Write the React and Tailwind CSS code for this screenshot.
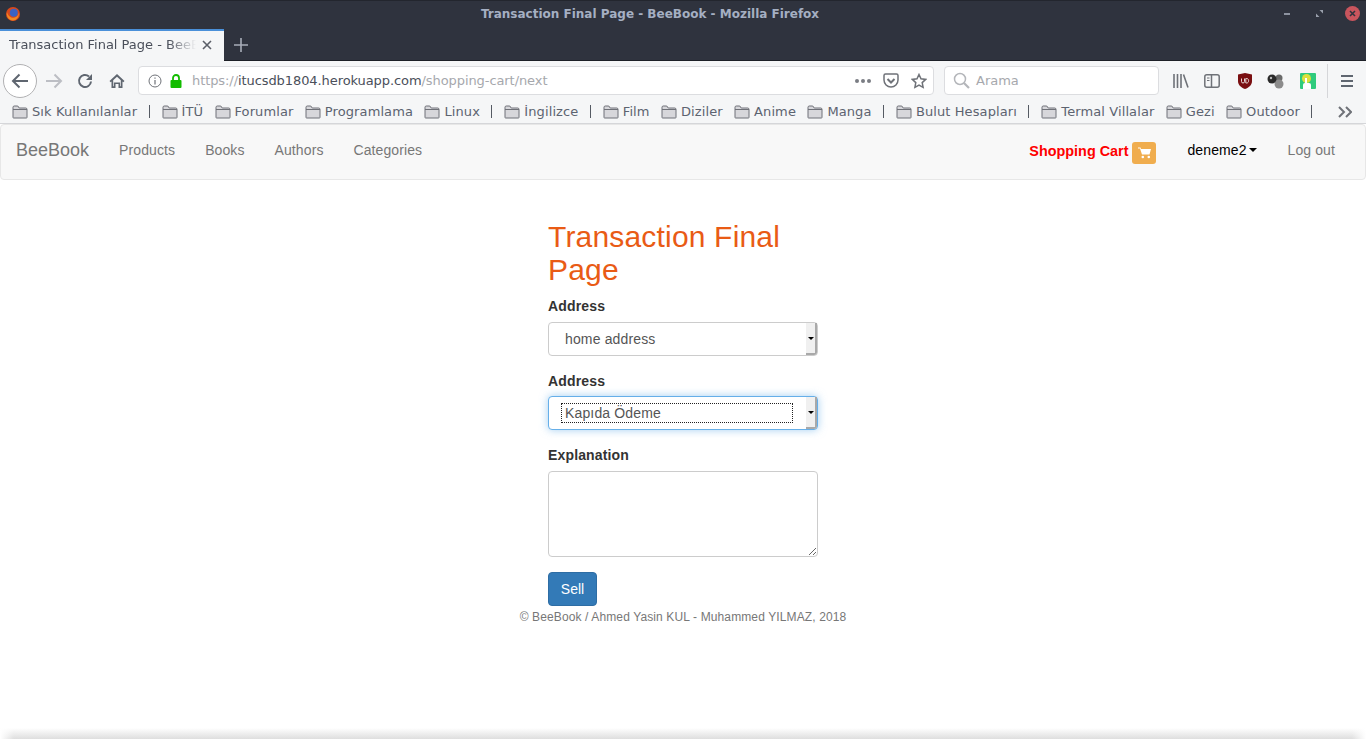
import React from 'react';

const bookmarks = [
  { name: 'Sık Kullanılanlar', sep: true },
  { name: 'İTÜ' },
  { name: 'Forumlar' },
  { name: 'Programlama' },
  { name: 'Linux', sep: true },
  { name: 'İngilizce', sep: true },
  { name: 'Film' },
  { name: 'Diziler' },
  { name: 'Anime' },
  { name: 'Manga', sep: true },
  { name: 'Bulut Hesapları', sep: true },
  { name: 'Termal Villalar' },
  { name: 'Gezi' },
  { name: 'Outdoor', sep: true },
];

const Folder = () => (
  <svg width="16" height="14" viewBox="0 0 16 14" className="shrink-0">
    <path d="M1 12.5V2.2C1 1.5 1.5 1 2.2 1h3.6l1.4 2h6.6c.7 0 1.2.5 1.2 1.2v8.3c0 .3-.2.5-.5.5h-13c-.3 0-.5-.2-.5-.5z" fill="#d7d7db" stroke="#6f7178" strokeWidth="1" />
    <path d="M1 4.5h14" stroke="#6f7178" strokeWidth="1" />
  </svg>
);

const TitleBar = () => (
  <div className="h-[29px] bg-[#2f333e] border-t border-[#23262e] relative flex items-center justify-center pr-[66px] shrink-0">
    <svg width="16" height="16" viewBox="0 0 16 16" className="absolute left-[5px] top-[5px]">
      <circle cx="8" cy="8" r="7" fill="#d9481c" />
      <circle cx="8.8" cy="6.8" r="4" fill="#3a62c4" />
      <path d="M2 6c1 5 6 7 9 5 1.5-1 2.5-2.500 2.700-4.500C14.500 11 11 15 7.500 14.500 3.500 14 1 10 2 6z" fill="#f08a24" />
    </svg>
    <span className="font-['DejaVu_Sans'] font-bold text-[12px] text-[#a5afc2] -mt-[2px]">Transaction Final Page - BeeBook - Mozilla Firefox</span>
    <div className="absolute right-[6px] top-[5px] flex items-center">
      <div className="w-[6px] h-[2px] bg-[#8d93a0] mr-[26px]" />
      <svg width="7" height="7" viewBox="0 0 7 7" className="mr-[22px]">
        <path d="M0 7V3.500L3.500 7zM7 0v3.500L3.500 0z" fill="#9aa0ac" />
      </svg>
      <div className="w-[15px] h-[15px] rounded-full bg-[#c9555d] flex items-center justify-center">
        <svg width="7" height="7" viewBox="0 0 7 7">
          <path d="M1 1l5 5M6 1L1 6" stroke="#2f333e" strokeWidth="1.600" />
        </svg>
      </div>
    </div>
  </div>
);

const TabStrip = () => (
  <div className="h-[32px] bg-[#2f333e] flex shrink-0 border-b border-[#1d2027]">
    <div className="w-[224px] h-[32px] bg-[#f5f6f7] border-t-2 border-[#4a90d9] flex items-center pl-[9px] relative">
      <span className="font-['DejaVu_Sans'] text-[13px] text-[#4a4f5a] w-[187px] -mt-[3px] overflow-hidden whitespace-nowrap mask-r-from-85%">Transaction Final Page - BeeBook</span>
      <svg width="10" height="10" viewBox="0 0 10 10" className="ml-[6px] -mt-[2px]">
        <path d="M1 1l8 8M9 1l-8 8" stroke="#5b5f68" strokeWidth="1.600" />
      </svg>
    </div>
    <div className="w-[34px] flex items-center justify-center">
      <svg width="14" height="14" viewBox="0 0 14 14">
        <path d="M7 0v14M0 7h14" stroke="#a8adb8" strokeWidth="1.600" />
      </svg>
    </div>
  </div>
);

const NavToolbar = () => (
  <div className="h-[38px] pt-[1px] bg-[#f5f6f7] flex items-center shrink-0 relative">
    <div className="w-[34px] h-[34px] ml-[3px] rounded-full border border-[#b1b1b3] bg-white flex items-center justify-center shrink-0">
      <svg width="18" height="16" viewBox="0 0 18 16" fill="none" stroke="#5f6670" strokeWidth="2">
        <path d="M17 8H2M8.500 1.500L2 8l6.500 6.500" />
      </svg>
    </div>
    <svg width="18" height="16" viewBox="0 0 18 16" fill="none" stroke="#bcbec4" strokeWidth="2" className="ml-[8px] shrink-0">
      <path d="M1 8h15M9.500 1.500L16 8l-6.500 6.500" />
    </svg>
    <svg width="16" height="16" viewBox="0 0 16 16" fill="none" className="ml-[14px] shrink-0">
      <path d="M14 8.500A6 6 0 1 1 12 3.500" stroke="#5f6670" strokeWidth="2" />
      <path d="M15 1v6H9z" fill="#5f6670" />
    </svg>
    <svg width="16" height="16" viewBox="0 0 16 16" className="ml-[16px] shrink-0">
      <path fillRule="evenodd" d="M8 1L0.500 8l1.200 1.200L2.500 8.500V15h4v-4h3v4h4V8.500l.8.7L15.500 8zM8 3.700l3.800 3.500V13.300h-.7V9.500H4.900v3.800h-.7V7.200z" fill="#5f6670" />
    </svg>
    <div className="ml-[13px] w-[796px] h-[29px] bg-white border border-[#dcdde0] rounded-[4px] flex items-center shrink-0">
      <svg width="14" height="14" viewBox="0 0 14 14" fill="none" className="ml-[9px] shrink-0">
        <circle cx="7" cy="7" r="6" stroke="#6f7278" strokeWidth="1" />
        <path d="M7 6v4.500M7 3.500v1.200" stroke="#6f7278" strokeWidth="1.200" />
      </svg>
      <svg width="14" height="14" viewBox="0 0 14 14" className="ml-[7px] shrink-0">
        <path d="M4 6V4a3 3 0 0 1 6 0v2" fill="none" stroke="#12bc00" strokeWidth="1.800" />
        <rect x="1.500" y="6" width="11" height="8" rx="1" fill="#12bc00" />
      </svg>
      <span className="ml-[9px] font-['DejaVu_Sans'] text-[13px] tracking-[-0.08px] text-[#a6a8ad] whitespace-nowrap">
        https://<span className="text-[#4a4f5a]">itucsdb1804.herokuapp.com</span>/shopping-cart/next
      </span>
      <div className="ml-auto flex items-center shrink-0">
        <div className="flex gap-[2px] mr-[12px]">
          <div className="w-[4px] h-[4px] rounded-full bg-[#7a7d83]" />
          <div className="w-[4px] h-[4px] rounded-full bg-[#7a7d83]" />
          <div className="w-[4px] h-[4px] rounded-full bg-[#7a7d83]" />
        </div>
        <svg width="16" height="15" viewBox="0 0 16 15" fill="none" stroke="#6f7278" strokeWidth="1.500" className="mr-[12px]">
          <path d="M2.500 1h11c.8 0 1.500.7 1.500 1.500V7a7 7 0 0 1-14 0V2.500C1 1.700 1.700 1 2.500 1z" />
          <path d="M4.500 6L8 9.500 11.500 6" strokeWidth="2" />
        </svg>
        <svg width="16" height="16" viewBox="0 0 16 16" fill="none" stroke="#6f7278" strokeWidth="1.500" className="mr-[6px]">
          <path d="M8 1.500l2 4.300 4.700.6-3.500 3.200.9 4.700L8 12l-4.100 2.300.9-4.700L1.300 6.400 6 5.800z" />
        </svg>
      </div>
    </div>
    <div className="ml-[10px] w-[215px] h-[29px] bg-white border border-[#dcdde0] rounded-[4px] flex items-center shrink-0">
      <svg width="17" height="17" viewBox="0 0 17 17" fill="none" stroke="#b4b6ba" className="ml-[8px] shrink-0">
        <circle cx="7" cy="7" r="5.500" strokeWidth="1.500" />
        <path d="M11 11l5 5" strokeWidth="2.200" />
      </svg>
      <span className="ml-[6px] font-['DejaVu_Sans'] text-[13px] text-[#a6a8ad]">Arama</span>
    </div>
    <svg width="16" height="14" viewBox="0 0 16 14" fill="none" stroke="#6f7278" strokeWidth="1.600" className="ml-[14px] shrink-0">
      <path d="M1 0v14M4.500 0v14M8 0v14M10.500 0.500L15 13.500" />
    </svg>
    <svg width="16" height="14" viewBox="0 0 16 14" fill="none" stroke="#6f7278" className="ml-[15px] shrink-0">
      <rect x="0.800" y="0.800" width="14.400" height="12.400" rx="2" strokeWidth="1.500" />
      <path d="M7.500 1v12" strokeWidth="1.500" />
      <path d="M3 4h2.500M3 6.500h2.500" strokeWidth="1" />
    </svg>
    <svg width="16" height="16" viewBox="0 0 16 16" className="ml-[17px] shrink-0">
      <path d="M1 1.500L8 0l7 1.500V8c0 4-3 6.500-7 8-4-1.500-7-4-7-8z" fill="#7a0f11" />
      <path d="M4.500 5.500v3a1.500 1.500 0 0 0 3 0v-3M8.800 5.500v4.500h1c2.400 0 2.400-4.500 0-4.500z" fill="none" stroke="#e8d8d8" strokeWidth="1" />
    </svg>
    <svg width="18" height="16" viewBox="0 0 18 16" className="ml-[14px] shrink-0">
      <circle cx="12" cy="5" r="3.500" fill="#6a6a6a" />
      <circle cx="12" cy="11" r="4.500" fill="#8c8c8c" />
      <circle cx="5" cy="6" r="4.500" fill="#2a2a2a" />
      <circle cx="4" cy="5" r="1.200" fill="#bbbbbb" />
    </svg>
    <div className="ml-[15px] w-[16px] h-[16px] rounded-[1px] bg-[#2fcb7d] relative overflow-hidden shrink-0">
      <div className="absolute left-[2px] top-[1px] w-[9px] h-[9px] rounded-full bg-[#dbe03c]" />
      <div className="absolute left-[5px] top-[5px] w-[2px] h-[8px] bg-white" />
      <div className="absolute left-[3px] top-[10px] w-[8px] h-[6px] bg-white rounded-t-[2px]" />
    </div>
    <div className="ml-[11px] w-px h-[34px] bg-[#d5d6d9] shrink-0" />
    <div className="ml-[13px] w-[12px] shrink-0 flex flex-col gap-[3px]">
      <div className="h-[2px] bg-[#5f6670]" />
      <div className="h-[2px] bg-[#5f6670]" />
      <div className="h-[2px] bg-[#5f6670]" />
    </div>
  </div>
);

const BookmarksBar = () => (
  <div className="h-[25px] pt-[1px] bg-[#f5f6f7] border-b border-[#d5d6d9] flex items-center pl-[12px] shrink-0 font-['DejaVu_Sans'] text-[13px] tracking-[0.1px] text-[#5c6370] whitespace-nowrap">
    {bookmarks.map((b) => (
      <React.Fragment key={b.name}>
        <div className="flex items-center gap-[4px] mr-[11.4px]">
          <Folder />
          <span>{b.name}</span>
        </div>
        {b.sep && <div className="w-px h-[13px] bg-[#555a63] mr-[12px]" />}
      </React.Fragment>
    ))}
    <svg width="14" height="12" viewBox="0 0 14 12" fill="none" stroke="#6f7278" strokeWidth="2" className="ml-auto mr-[14px]">
      <path d="M1 1l5 5-5 5M8 1l5 5-5 5" />
    </svg>
  </div>
);

const SelectBox = ({ value, focused }) => (
  <div className={`h-[34px] w-[270px] rounded-[4px] border flex items-stretch bg-white relative ${focused ? "border-[#66afe9] shadow-[0_0_8px_rgba(102,175,233,0.6)]" : "border-[#ccc]"}`}>
    <div className="flex-1 flex items-center pl-[16px] relative text-[14px] tracking-[0.15px] text-[#555]">
      {focused && <div className="absolute left-[12px] top-[6px] w-[232px] h-[20px] border border-dotted border-[#222]" />}
      <span className="relative">{value}</span>
    </div>
    <div className="w-[11px] bg-[#f0f0f0] border-r-2 border-b-2 border-[#a9a9a9] rounded-br-[3px] flex items-center justify-center">
      <div className="w-0 h-0 border-x-[3px] border-x-transparent border-t-[3px] border-t-black" />
    </div>
  </div>
);

const Navbar = () => (
  <div className="h-[56px] bg-[#f8f8f8] border border-[#e7e7e7] rounded-[4px] flex items-start shrink-0 text-[14px] tracking-[0.1px] text-[#777]">
    <span className="pl-[15px] pr-[15px] pt-[15px] text-[18px] leading-[20px] tracking-normal">BeeBook</span>
    <span className="px-[15px] pt-[15px] leading-[20px]">Products</span>
    <span className="px-[15px] pt-[15px] leading-[20px]">Books</span>
    <span className="px-[15px] pt-[15px] leading-[20px]">Authors</span>
    <span className="px-[15px] pt-[15px] leading-[20px]">Categories</span>
    <div className="ml-auto flex items-start">
      <span className="pt-[16px] leading-[20px] text-[14.4px] tracking-normal font-bold text-[#ff0000]">Shopping Cart</span>
      <div className="ml-[4px] mt-[17px] w-[24px] h-[22px] rounded-[3px] bg-[#f0ad4e] flex items-center justify-center">
        <svg width="13" height="12" viewBox="0 0 13 12" fill="#fff">
          <path d="M0 0.500h2.500l.5 1.500h10l-1.500 5.500H4L2 1.500H0z" />
          <circle cx="4.800" cy="10" r="1.300" />
          <circle cx="10.800" cy="10" r="1.300" />
        </svg>
      </div>
      <div className="ml-[31px] pt-[15px] leading-[20px] text-black flex items-center">
        deneme2
        <div className="ml-[2px] w-0 h-0 border-x-[4px] border-x-transparent border-t-[4px] border-t-black" />
      </div>
      <span className="ml-[31px] mr-[30px] pt-[15px] leading-[20px]">Log out</span>
    </div>
  </div>
);

const App = () => {
  return (
    <div className="h-[739px] w-[1366px] overflow-hidden flex flex-col bg-white font-['Liberation_Sans',sans-serif] text-[#333]">
      <TitleBar />
      <TabStrip />
      <NavToolbar />
      <BookmarksBar />
      <Navbar />
      <div className="flex-1 flex flex-col items-center">
        <div className="w-[270px] pt-[40px]">
          <h2 className="text-[30px] leading-[33px] tracking-[0.18px] text-[#e95b15] mb-[10px]">Transaction Final Page</h2>
          <label className="block text-[14px] leading-[20px] tracking-[0.15px] font-bold mb-[6px]">Address</label>
          <SelectBox value="home address" />
          <label className="block text-[14px] leading-[20px] tracking-[0.15px] font-bold mt-[15px] mb-[5px]">Address</label>
          <SelectBox value="Kapıda Ödeme" focused />
          <label className="block text-[14px] leading-[20px] tracking-[0.15px] font-bold mt-[15px] mb-[6px]">Explanation</label>
          <textarea className="block w-[270px] h-[86px] border border-[#ccc] rounded-[4px] bg-white" />
          <button className="block mt-[15px] w-[49px] h-[34px] bg-[#337ab7] border border-[#2e6da4] rounded-[4px] text-white text-[14px]">Sell</button>
        </div>
        <p className="text-[12px] leading-[17px] tracking-[0.12px] text-[#777] mt-[3px]">© BeeBook / Ahmed Yasin KUL - Muhammed YILMAZ, 2018</p>
      </div>
      <div className="h-[11px] shrink-0 bg-gradient-to-b from-white to-[#dedede] flex justify-between">
        <div className="w-[14px] bg-gradient-to-r from-white to-transparent" />
        <div className="w-[14px] bg-gradient-to-l from-white to-transparent" />
      </div>
    </div>
  );
};

export default App;
